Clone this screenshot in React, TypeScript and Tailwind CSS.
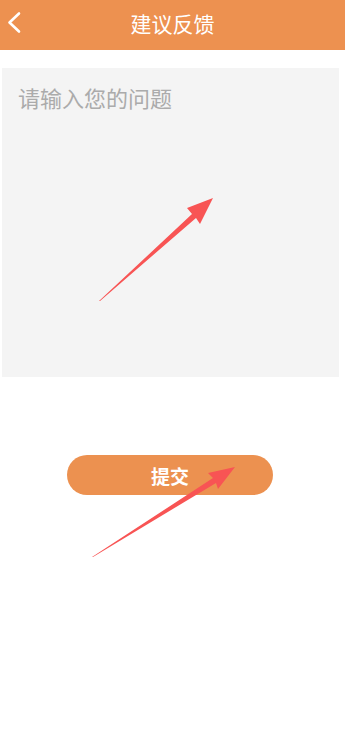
import React from "react";

export default function App() {
  const font = { fontFamily: '"Noto Sans CJK SC", "Noto Sans", sans-serif' };
  return (
    <div className="relative w-[345px] h-[743px] bg-white overflow-hidden" style={font}>
      <div className="relative h-[50px] bg-[#ED9150] flex items-center justify-center pb-[4px]">
        <svg className="absolute left-0 top-0" width="40" height="50" viewBox="0 0 40 50">
          <path d="M19 13.5 L9.5 22.5 L19 31.5" fill="none" stroke="white" strokeWidth="2.6" strokeLinecap="round" strokeLinejoin="round" />
        </svg>
        <span className="text-white text-[21px] font-normal leading-none">建议反馈</span>
      </div>
      <div className="mt-[18px] ml-[2px] w-[337px] h-[309px] bg-[#F4F4F4]">
        <textarea
          className="w-full h-full resize-none bg-transparent outline-none px-[16px] pt-[14px] text-[22px] leading-[30px] text-[#333] placeholder:text-[#ABABAB]"
          style={font}
          placeholder="请输入您的问题"
        />
      </div>
      <div className="mt-[78px] ml-[67px] w-[206px] h-[40px] rounded-full bg-[#EC9150] flex items-center justify-center">
        <span className="text-white text-[19px] font-bold leading-none">提交</span>
      </div>
      <svg className="absolute left-0 top-0 pointer-events-none" width="345" height="743" viewBox="0 0 345 743">
        <polygon points="99,301 192,214 187,208 213,198 200,224 196,218 100,301" fill="#F85454" />
        <polygon points="92,557 213,478 208,473 235,467 218,489 216,483 93,557" fill="#F85454" />
      </svg>
    </div>
  );
}
